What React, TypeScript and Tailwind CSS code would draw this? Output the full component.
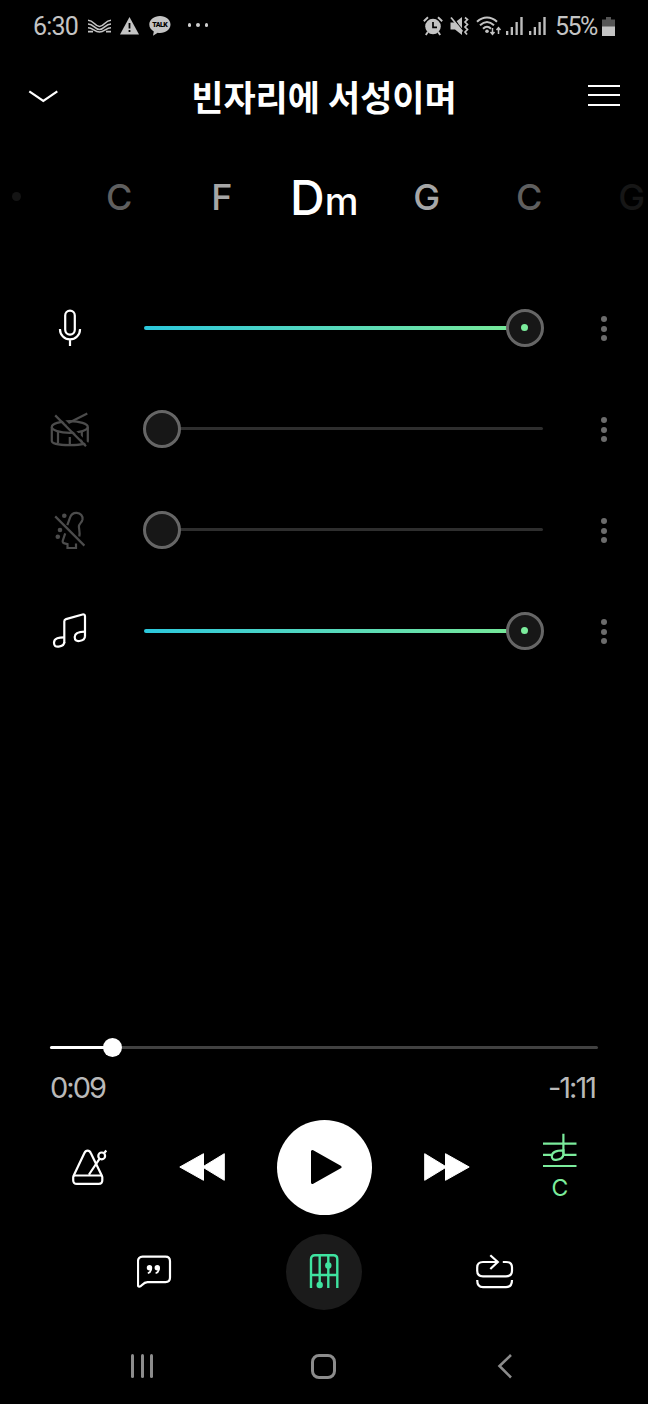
import type { ReactNode } from 'react';

const ICONS: Record<string, ReactNode> = {
  mic: (
    <>
      <rect x="15.2" y="2.6" width="9.6" height="24" rx="4.8" />
      <path d="M10 21v.5a10 9.8 0 0 0 20 0V21M20 31.5V38" />
    </>
  ),
  drum: (
    <>
      <ellipse cx="19.8" cy="18" rx="18" ry="5.8" />
      <path d="M1.8 18v14c0 2.500 8 4.200 18 4.200s18-1.700 18-4.200V18M8 22v12M19.800 28v8M31.800 22v12M16 15.200 37.300 4.600" />
      <path d="M7.200 4.800 38 35.400" stroke="#000" strokeWidth="2.400" />
      <path d="m5.200 6.400 30.800 30.800" />
    </>
  ),
  shaker: (
    <>
      <g fill="currentColor" stroke="none">
        <circle cx="14.3" cy="5.8" r="2.3" />
        <circle cx="10" cy="20" r="2.3" />
        <circle cx="7.8" cy="26.8" r="2.3" />
      </g>
      <path d="m17.300 15.200 2.900-8c1.200-3 3.600-4.500 6.500-4.300 4 .3 6.400 3.200 5.800 6.600-.7 3.500-3.600 4-3.600 7 0 2.500 1.400 6.500.4 10" />
      <path d="m15.200 23.300-2.400 7.200c-.5 1.700.3 2.600 1.700 2.900l3 .8V38H26v-4.500M5.200 6.400l29.200 29.200" />
    </>
  ),
  note: (
    <>
      <path d="M14.300 32.200V10.300c0-1.200.6-1.900 1.700-2.200l16.500-4.600c1.400-.4 2.500.3 2.500 1.700v20.600" />
      <path d="M14.300 26.400c-5 0-10.300.6-10.300 5.300 0 3.400 1.800 4.200 4.700 3.900 3.500-.4 5.600-1.300 5.600-4.600M35 20.700c-5 0-10.300.7-10.300 5.400 0 3.400 1.800 4.300 4.700 3.900 3.500-.5 5.600-1.400 5.600-4.700" />
    </>
  ),
};

const TRACKS = [
  { icon: 'mic', on: true },
  { icon: 'drum', on: false },
  { icon: 'shaker', on: false },
  { icon: 'note', on: true },
];

const CHORDS = [
  { name: 'C', color: 'text-[#5f5f5f]' },
  { name: 'F', color: 'text-[#a6a6a6]' },
  { name: 'Dm', color: 'text-white' },
  { name: 'G', color: 'text-[#a6a6a6]' },
  { name: 'C', color: 'text-[#5f5f5f]' },
  { name: 'G', color: 'text-[#161616]' },
];

function Signal() {
  return (
    <svg className="h-[18px] w-[17px]" viewBox="0 0 17 18" fill="#bdbdbd">
      <rect x="0" y="14" width="2.300" height="4" />
      <rect x="4.700" y="10" width="2.300" height="8" />
      <rect x="9.500" y="5" width="2.300" height="13" />
      <rect x="14.300" y="0" width="2.400" height="18" />
    </svg>
  );
}

function StatusBar() {
  return (
    <div className="flex h-[52px] items-center pl-[33px] font-['Roboto',sans-serif] text-[#c4c4c4]">
      <span className="w-[55px] text-[25px] leading-none tracking-[-0.8px]">6:30</span>
      <svg className="h-[14px] w-[23px]" viewBox="0 0 23 14" fill="none" stroke="currentColor" strokeWidth="1.600">
        <path d="M0 1.200c6 0 6.500 6.300 11.500 6.300S17 1.200 23 1.200M0 5c6 0 6.500 5.500 11.500 5.500S17 5 23 5M0 8.800c5 0 6.500 4.200 11.500 4.200S18 8.800 23 8.800M0 12.600h5M18 12.600h5" />
      </svg>
      <svg className="ml-[9px] h-[18px] w-[19px]" viewBox="0 0 19 18">
        <path d="M9.500 0 19 17.500H0z" fill="currentColor" />
        <path d="M9.500 6v5.500M9.500 13v2" stroke="#000" strokeWidth="1.800" />
      </svg>
      <svg className="ml-[10px] h-[20px] w-[22px]" viewBox="0 0 22 20">
        <path d="M11 0C5 0 .3 3.800.3 8.500c0 3 1.800 5.400 4.500 6.900L4 19.700l4.700-3c.7.1 1.500.2 2.300.2 6 0 10.500-3.700 10.500-8.400S17 0 11 0z" fill="currentColor" />
        <text x="11" y="11.200" fontSize="7" fontWeight="900" textAnchor="middle" textLength="15.500" fill="#000">TALK</text>
      </svg>
      <div className="ml-[17px] flex gap-[5px] pb-[2px]">
        <i className="size-[3.400px] rounded-full bg-[#d0d0d0]" />
        <i className="size-[3.400px] rounded-full bg-[#d0d0d0]" />
        <i className="size-[3.400px] rounded-full bg-[#d0d0d0]" />
      </div>

      <div className="ml-auto flex items-center pr-[33px]">
        <svg className="h-[20px] w-[20px]" viewBox="0 0 20 20" fill="none" stroke="currentColor">
          <circle cx="10" cy="10.500" r="7.800" fill="currentColor" stroke="none" />
          <path d="M.8 5.200 5 1.200M19.200 5.200 15 1.200M4.800 16l-2 3M15.200 16l2 3" strokeWidth="1.900" />
          <path d="M10 6v5.300h4" stroke="#000" strokeWidth="1.700" />
        </svg>
        <svg className="ml-[7px] h-[20px] w-[19px]" viewBox="0 0 19 20" fill="none" stroke="currentColor">
          <path d="M.5 6.500h4.500L12 1v18l-7-5.500H.5z" fill="currentColor" stroke="none" />
          <path d="M4 2.500 8 8M3.500 3 12.500 14" stroke="#000" strokeWidth="1.200" />
          <path d="m1 1.500 11.500 14" strokeWidth="1.700" />
          <path d="m15 1.500 2.500 2L15 6l2.500 2.500L15 11l2.500 2.500L15 16l2 2.500" strokeWidth="1.700" />
        </svg>
        <svg className="ml-[7px] h-[20px] w-[26px]" viewBox="0 0 26 20" fill="none" stroke="currentColor" strokeWidth="2">
          <path d="M1 5.800c6-5.700 14-5.700 20 0M4 9.300c4.500-4.300 9.500-4.300 14 0M7 12.700c2.600-2.500 5.400-2.500 8 0" />
          <circle cx="11" cy="15.300" r="1.800" fill="currentColor" stroke="none" />
          <path d="M16.500 12v6M14.500 16l2 2.300 2-2.300M22.500 18v-6M20.500 14l2-2.300 2 2.300" strokeWidth="1.500" />
        </svg>
        <div className="ml-[4px] flex gap-[6px]">
          <Signal />
          <Signal />
        </div>
        <span className="ml-[9px] w-[47px] text-[25px] leading-none tracking-[-1.500px]">55%</span>
        <svg className="h-[19px] w-[13px]" viewBox="0 0 13 19">
          <path d="M0 2.500h4V0h5v2.500h4V10H0z" fill="#555" />
          <rect y="9.500" width="13" height="9.500" fill="#c4c4c4" />
        </svg>
      </div>
    </div>
  );
}

function Header() {
  return (
    <header className="flex h-[88px] items-center justify-between px-[28px]">
      <svg className="h-[14px] w-[32px]" viewBox="0 0 32 14" fill="none" stroke="#fff" strokeWidth="2.200">
        <path d="m1.300 2.300 14 9.500 14-9.500" />
      </svg>
      <h1 className="pb-[2px] text-[35px] leading-none font-bold whitespace-nowrap text-white font-['Noto_Sans_CJK_KR',sans-serif]">빈자리에 서성이며</h1>
      <div className="flex w-[32px] flex-col gap-[7.500px] pb-[2px]">
        <i className="h-[2px] bg-white" />
        <i className="h-[2px] bg-white" />
        <i className="h-[2px] bg-white" />
      </div>
    </header>
  );
}

function Chords() {
  return (
    <div className="flex h-[115px] w-[648px] items-center overflow-hidden pl-[12px]">
      <span className="mb-[2px] size-[9px] shrink-0 rounded-full bg-[#141414]" />
      <div className="ml-[47px] flex items-center">
        {CHORDS.map((c, i) => (
          <span
            key={i}
            className={`w-[102.500px] shrink-0 text-center font-medium ${c.color} ${c.name === 'Dm' ? 'text-[48px] leading-[48px]' : 'pb-[2px] text-[36px] leading-[36px]'}`}
          >
            {c.name === 'Dm' ? <>D<span className="text-[38px] leading-none">m</span></> : c.name}
          </span>
        ))}
      </div>
    </div>
  );
}

function Track({ icon, on }: { icon: string; on: boolean }) {
  return (
    <div className="flex h-[101px] items-center pl-[50px]">
      <svg
        className={on ? 'size-[40px] text-white' : 'size-[40px] text-[#4c4c4c]'}
        viewBox="0 0 40 40"
        fill="none"
        stroke="currentColor"
        strokeWidth="2.200"
      >
        {ICONS[icon]}
      </svg>
      <div className="relative ml-[54px] flex h-[38px] w-[400px] items-center">
        <div className={on ? 'h-[4px] w-[380px] rounded-full bg-linear-to-r from-[#2bc8dc] to-[#78e995]' : 'h-[3px] w-[399px] rounded-full bg-[#2e2e2e]'} />
        <div className={`absolute top-0 flex size-[38px] items-center justify-center rounded-full border-3 border-[#666] bg-[#171717] ${on ? 'right-[0.500px]' : 'left-[-1px]'}`}>
          {on && <i className="size-[7px] rounded-full bg-[#7bec9c]" />}
        </div>
      </div>
      <div className="ml-[57px] flex flex-col gap-[3.500px] pt-[2px]">
        <i className="size-[6px] rounded-full bg-[#6c6c6c]" />
        <i className="size-[6px] rounded-full bg-[#6c6c6c]" />
        <i className="size-[6px] rounded-full bg-[#6c6c6c]" />
      </div>
    </div>
  );
}

function Progress() {
  return (
    <div className="px-[50px]">
      <div className="relative flex h-[20px] items-center">
        <div className="h-[3px] w-full rounded-full bg-[#414141]" />
        <div className="absolute left-0 h-[3px] w-[62px] rounded-full bg-white" />
        <div className="absolute left-[53px] size-[19px] rounded-full bg-white" />
      </div>
      <div className="mt-[13px] flex justify-between pr-[3px] text-[29px] leading-[36px] tracking-[-2px] text-[#b9b9b9]">
        <span>0:09</span>
        <span>-1:11</span>
      </div>
    </div>
  );
}

function Controls() {
  return (
    <div className="mt-[13px] flex h-[96px] items-center pl-[72px]">
      <svg className="h-[36px] w-[36px]" viewBox="0 0 36 36" fill="none" stroke="#fff" strokeWidth="2.200">
        <path d="M1.500 27 12.300 4.200c1.600-3.500 5-3.500 6.600 0L30 27" />
        <path d="M3 26.500h25.500c1.200 0 1.800.7 1.800 1.800v2.900c0 2.500-1.300 3.600-3.600 3.600H4.800c-2.300 0-3.600-1.100-3.600-3.600v-2.900c0-1.100.6-1.800 1.800-1.800zM17 25.500 27.500 9.800M32 4.300l2.300-2.800" />
        <circle cx="29.700" cy="6.900" r="3.400" />
      </svg>
      <svg className="ml-[71px] h-[28px] w-[46px]" viewBox="0 0 46 28" fill="#fff" stroke="#fff" strokeLinejoin="round">
        <path d="M.8 14 24.500.7v26.600zM23.500 14 45.300.7v26.600z" />
      </svg>
      <button className="ml-[51.500px] flex size-[95px] items-center justify-center rounded-full bg-white">
        <svg className="ml-[3px] h-[36px] w-[32px]" viewBox="0 0 32 36" stroke="#000" strokeWidth="3" strokeLinejoin="round">
          <path d="M2.500 2.500v31L30 18z" />
        </svg>
      </button>
      <svg className="ml-[52.500px] h-[28px] w-[46px]" viewBox="0 0 46 28" fill="#fff" stroke="#fff" strokeLinejoin="round">
        <path d="M.7.7v26.600L22.500 14zM21.500.7v26.600L45.200 14z" />
      </svg>
      <div className="ml-[72px] flex w-[36px] flex-col items-center text-[#7bec9c]">
        <svg className="h-[36px] w-[36px]" viewBox="0 0 36 36" fill="none" stroke="currentColor" strokeWidth="2.200">
          <path d="M1 10.700h33.500M1 21.800h8.500M22 21.800h12.500M1 33h33.500M21.400.7v20" />
          <path d="M21.400 17.300c-6 0-11.600 1.200-11.600 6 0 2.800 1.500 3.800 4.300 3.500 4.800-.4 7.300-1.800 7.300-5.800z" />
        </svg>
        <span className="mt-[5px] text-[23px] leading-[28px]">C</span>
      </div>
    </div>
  );
}

function BottomTools() {
  return (
    <div className="mt-[19px] flex h-[76px] items-center pl-[137px]">
      <svg className="h-[34px] w-[36px]" viewBox="0 0 36 34" fill="none" stroke="#fff" strokeWidth="2.200">
        <path d="M5.500 1.700h23c3 0 4.500 1.700 4.500 4.500v16.300c0 2.900-1.500 4.600-4.500 4.600H10.500c-2.500 0-4 1.300-5.500 2.900-2 2.100-4 2.400-4 0V6.200c0-2.800 1.500-4.500 4.500-4.500z" />
        <path d="M10.800 18.300c2.300-.7 3.500-2.200 3.500-5.500M18.600 18.300c2.300-.7 3.500-2.200 3.500-5.500" strokeWidth="1.700" />
        <circle cx="12.500" cy="12.700" r="2.700" fill="#fff" stroke="none" />
        <circle cx="20.300" cy="12.700" r="2.700" fill="#fff" stroke="none" />
      </svg>
      <div className="ml-[113px] flex size-[76px] items-center justify-center rounded-full bg-[#1b1b1b]">
        <svg className="h-[36px] w-[30px]" viewBox="0 0 30 36" fill="none" stroke="#3fe3a0" strokeWidth="2.400">
          <path d="M2 34V5.200c0-2.600 1.300-3.900 3.900-3.900h18.500c2.600 0 3.900 1.300 3.900 3.900V34M10.700 1.300V34M19.300 1.300V34M2 21h26.300" />
          <circle cx="19.300" cy="11.500" r="3.200" fill="#3fe3a0" stroke="none" />
          <circle cx="10.700" cy="31" r="3.200" fill="#3fe3a0" stroke="none" />
        </svg>
      </div>
      <svg className="ml-[114px] h-[36px] w-[38px]" viewBox="0 0 38 36" fill="none" stroke="#fff" strokeWidth="2.200">
        <path d="M21.500 8H7C3 8 1.200 10 1.200 13.500v3.300c0 3.600 1.800 5.500 5.800 5.500h23c4 0 6-1.900 6-5.500v-3.300C36 10 34 8 30 8h-3.200M14.300 1.200 21.800 8l-7.500 7M1.200 26c0 5 1.800 7.200 5.800 7.200h23c4 0 6-2.200 6-7.200" />
      </svg>
    </div>
  );
}

function NavBar() {
  return (
    <nav className="mt-[43px] flex h-[26px] items-center pl-[131px]">
      <div className="flex gap-[6.500px]">
        <i className="h-[24px] w-[3px] rounded-full bg-[#8c8c8c]" />
        <i className="h-[24px] w-[3px] rounded-full bg-[#8c8c8c]" />
        <i className="h-[24px] w-[3px] rounded-full bg-[#8c8c8c]" />
      </div>
      <div className="ml-[158px] size-[25px] rounded-[8px] border-3 border-[#8c8c8c]" />
      <svg className="ml-[161px] h-[26px] w-[16px]" viewBox="0 0 16 26" fill="none" stroke="#8c8c8c" strokeWidth="2.600">
        <path d="M14 2 2.500 13 14 24.500" />
      </svg>
    </nav>
  );
}

export default function App() {
  return (
    <div className="flex h-[1404px] w-[648px] flex-col overflow-hidden bg-black font-['Inter',sans-serif]">
      <StatusBar />
      <Header />
      <Chords />
      <div className="mt-[22px]">
        {TRACKS.map((t) => (
          <Track key={t.icon} icon={t.icon} on={t.on} />
        ))}
      </div>
      <div className="mt-[356px]">
        <Progress />
        <Controls />
        <BottomTools />
        <NavBar />
      </div>
    </div>
  );
}
